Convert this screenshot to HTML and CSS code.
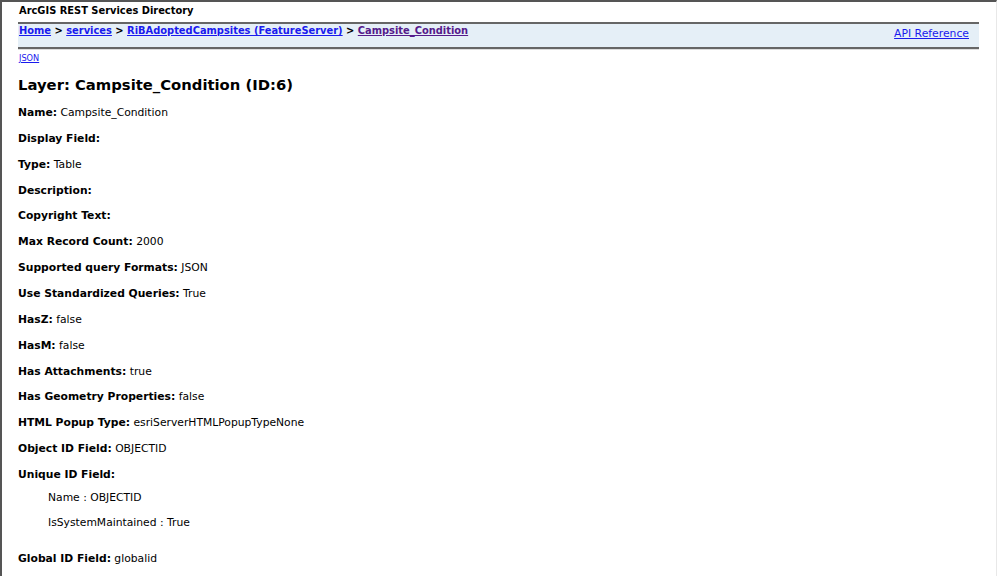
FILE: index.html
```
<!DOCTYPE html>
<html lang="en">
<head>
    <meta charset="UTF-8">
    <title>Layer: Campsite_Condition (ID:6)</title>
    <link rel="stylesheet" href="styles.css">
</head>
<body>
    <div class="frame">
        <div class="titleCell">ArcGIS REST Services Directory</div>

        <div class="navTable">
            <div class="breadcrumbs">
                <a href="#">Home</a> &gt; <a href="#">services</a> &gt; <a href="#">RiBAdoptedCampsites (FeatureServer)</a> &gt; <a href="#" class="visited">Campsite_Condition</a>
            </div>
            <div class="apiref"><a href="#">API Reference</a></div>
        </div>

        <div class="restBody">
            <div class="formats"><a href="#">JSON</a></div>

            <h2>Layer: Campsite_Condition (ID:6)</h2>

            <div class="field"><b>Name:</b> Campsite_Condition</div>
            <div class="field"><b>Display Field:</b> </div>
            <div class="field"><b>Type:</b> Table</div>
            <div class="field"><b>Description:</b> </div>
            <div class="field"><b>Copyright Text:</b> </div>
            <div class="field"><b>Max Record Count:</b> 2000</div>
            <div class="field"><b>Supported query Formats:</b> JSON</div>
            <div class="field"><b>Use Standardized Queries:</b> True</div>
            <div class="field"><b>HasZ:</b> false</div>
            <div class="field"><b>HasM:</b> false</div>
            <div class="field"><b>Has Attachments:</b> true</div>
            <div class="field"><b>Has Geometry Properties:</b> false</div>
            <div class="field"><b>HTML Popup Type:</b> esriServerHTMLPopupTypeNone</div>
            <div class="field"><b>Object ID Field:</b> OBJECTID</div>
            <div class="field field-list"><b>Unique ID Field:</b></div>
            <ul class="subfields">
                <li>Name : OBJECTID</li>
                <li>IsSystemMaintained : True</li>
            </ul>
            <div class="field"><b>Global ID Field:</b> globalid</div>
        </div>
    </div>
</body>
</html>
```

FILE: styles.css
```
html, body {
    margin: 0;
    padding: 0;
    height: 100%;
    background-color: white;
}

body {
    font-family: "DejaVu Sans", Verdana, sans-serif;
    font-size: 10.75px;
    color: black;
}

.frame {
    box-sizing: border-box;
    width: 997px;
    height: 100%;
    border-top: 2px solid #555;
    border-left: 2px solid #555;
    border-right: 1px solid #e8e8e8;
    padding: 0 17px 0 16px;
    overflow: hidden;
}

a {
    color: #1a1aee;
}

a.visited {
    color: #551a8b;
}

.titleCell {
    font-weight: bold;
    font-size: 9.9px;
    line-height: 16px;
    height: 19px;
    padding: 1px 0 0 1px;
}

.navTable {
    display: flex;
    justify-content: space-between;
    background-color: #e5eff7;
    border-top: 2px solid #666;
    border-bottom: 2px solid #666;
    box-shadow: 0 1px 0 #ddd;
    height: 23px;
    padding: 0 10px 0 1px;
}

.breadcrumbs {
    font-weight: bold;
    font-size: 9.9px;
    line-height: 12px;
    padding-top: 1px;
}

.apiref {
    font-size: 10.8px;
    line-height: 12px;
    padding-top: 4px;
}

.formats {
    font-size: 8.2px;
    line-height: 10px;
    padding: 4px 0 0 1px;
}

h2 {
    font-size: 14.8px;
    line-height: 18px;
    margin: 13px 0 11px 0;
}

.field {
    line-height: 16px;
    margin-bottom: 9.86px;
}

.field-list {
    margin-bottom: 7px;
}

.subfields {
    list-style: none;
    margin: 7px 0 20px 0;
    padding-left: 30px;
}

.subfields li {
    line-height: 16px;
    margin-bottom: 9px;
}
```
